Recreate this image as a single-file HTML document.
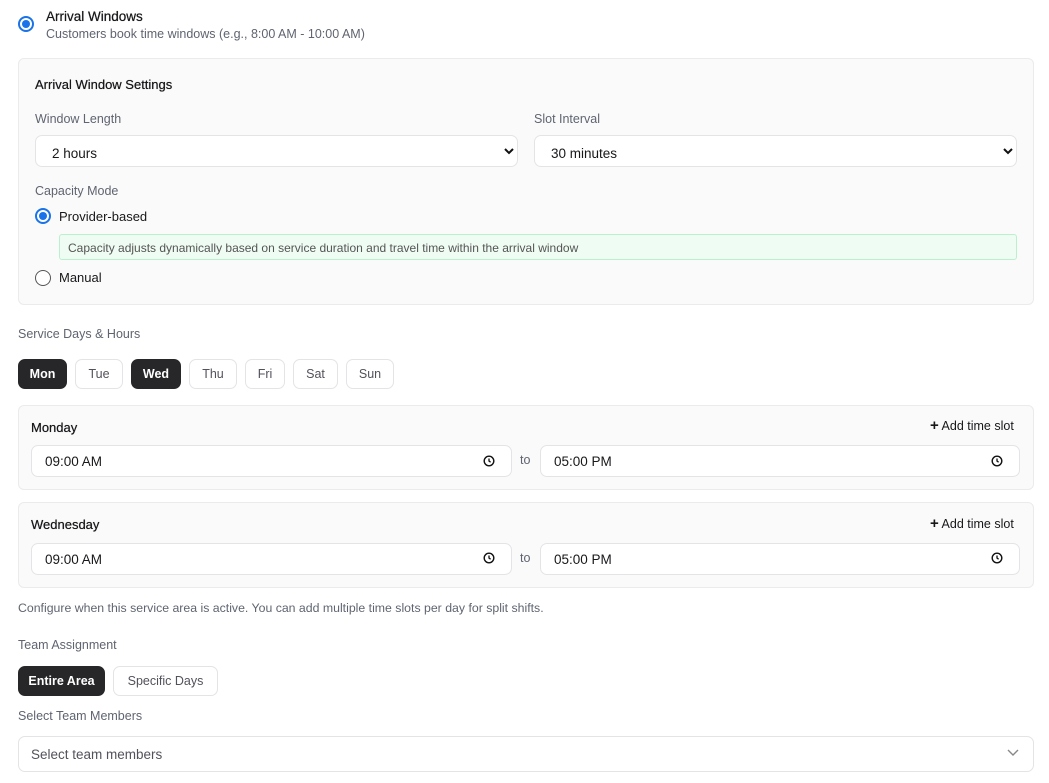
<!DOCTYPE html>
<html><head><style>
*{box-sizing:border-box;margin:0;padding:0}
body{width:1049px;height:783px;background:#fff;font-family:"Liberation Sans",sans-serif;color:#18181b;position:relative;overflow:hidden}
.a{position:absolute}
.t13{font-size:12.5px}
.muted{color:#5f6470}
.box{background:#fafafa;border:1px solid #ebebeb;border-radius:6px}
.inp{background:#fff;border:1px solid #e4e4e7;border-radius:7px;font-size:13.5px}
.radio{width:16px;height:16px;border-radius:50%;border:1.5px solid #555;background:#fff}
.radio.on{border:2px solid #1a73e8}
.radio.on::after{content:"";position:absolute;left:2px;top:2px;width:8px;height:8px;border-radius:50%;background:#1a73e8}
.day{height:30px;border:1px solid #e4e4e7;border-radius:7px;font-size:12.5px;color:#52525b;display:flex;align-items:center;justify-content:center;background:#fff;top:359px}
.day.on{background:#27272a;color:#fff;border-color:#27272a;font-weight:bold}
.h{font-size:13px;font-weight:normal;text-shadow:0 0 0.5px #18181b}
</style></head><body>
<div class="a radio on" style="left:18px;top:16px"></div>
<div class="a h" style="left:46px;top:9px;font-size:13.5px">Arrival Windows</div>
<div class="a t13 muted" style="left:46px;top:27px">Customers book time windows (e.g., 8:00 AM - 10:00 AM)</div>

<div class="a box" style="left:18px;top:58px;width:1016px;height:247px"></div>
<div class="a h" style="left:35px;top:77px">Arrival Window Settings</div>
<div class="a t13 muted" style="left:35px;top:112px">Window Length</div>
<div class="a t13 muted" style="left:534px;top:112px">Slot Interval</div>
<div class="a inp" style="left:35px;top:135px;width:483px;height:32px;padding:10px 16px">2 hours</div>
<div class="a inp" style="left:534px;top:135px;width:483px;height:32px;padding:10px 16px">30 minutes</div>
<svg class="a" style="left:503px;top:146px" width="12" height="10"><path d="M2 3l4 4 4-4" stroke="#111" stroke-width="2" fill="none"/></svg>
<svg class="a" style="left:1002px;top:146px" width="12" height="10"><path d="M2 3l4 4 4-4" stroke="#111" stroke-width="2" fill="none"/></svg>
<div class="a t13 muted" style="left:35px;top:184px">Capacity Mode</div>
<div class="a radio on" style="left:35px;top:208px"></div>
<div class="a" style="left:59px;top:209px;font-size:13px">Provider-based</div>
<div class="a" style="left:59px;top:234px;width:958px;height:26px;background:#effcf3;border:1px solid #bbf0cc;border-radius:3px;font-size:12px;color:#555;padding:6px 8px">Capacity adjusts dynamically based on service duration and travel time within the arrival window</div>
<div class="a radio" style="left:35px;top:270px"></div>
<div class="a" style="left:59px;top:270px;font-size:13px">Manual</div>

<div class="a t13 muted" style="left:18px;top:327px">Service Days &amp; Hours</div>
<div class="a day on" style="left:18px;width:49px">Mon</div>
<div class="a day" style="left:75px;width:48px">Tue</div>
<div class="a day on" style="left:131px;width:50px">Wed</div>
<div class="a day" style="left:189px;width:48px">Thu</div>
<div class="a day" style="left:245px;width:40px">Fri</div>
<div class="a day" style="left:293px;width:45px">Sat</div>
<div class="a day" style="left:346px;width:48px">Sun</div>

<div class="a box" style="left:18px;top:405px;width:1016px;height:85px"></div>
<div class="a h" style="left:31px;top:420px">Monday</div>
<div class="a" style="left:930px;top:419px;font-size:12.5px"><b style="font-size:15px;line-height:12px">+</b> Add time slot</div>
<div class="a inp" style="left:31px;top:445px;width:481px;height:32px;padding:8px 13px">09:00 AM</div>
<div class="a t13 muted" style="left:520px;top:453px">to</div>
<div class="a inp" style="left:540px;top:445px;width:480px;height:32px;padding:8px 13px">05:00 PM</div>

<div class="a box" style="left:18px;top:502px;width:1016px;height:86px"></div>
<div class="a h" style="left:31px;top:517px">Wednesday</div>
<div class="a" style="left:930px;top:517px;font-size:12.5px"><b style="font-size:15px;line-height:12px">+</b> Add time slot</div>
<div class="a inp" style="left:31px;top:543px;width:481px;height:32px;padding:8px 13px">09:00 AM</div>
<div class="a t13 muted" style="left:520px;top:551px">to</div>
<div class="a inp" style="left:540px;top:543px;width:480px;height:32px;padding:8px 13px">05:00 PM</div>
<svg class="a" style="left:483px;top:455px" width="12" height="12"><circle cx="6" cy="6" r="4.8" stroke="#111" stroke-width="1.4" fill="none"/><path d="M6 3.5V6l1.6 1.2" stroke="#111" stroke-width="1.3" fill="none"/></svg>
<svg class="a" style="left:991px;top:455px" width="12" height="12"><circle cx="6" cy="6" r="4.8" stroke="#111" stroke-width="1.4" fill="none"/><path d="M6 3.5V6l1.6 1.2" stroke="#111" stroke-width="1.3" fill="none"/></svg>
<svg class="a" style="left:483px;top:552px" width="12" height="12"><circle cx="6" cy="6" r="4.8" stroke="#111" stroke-width="1.4" fill="none"/><path d="M6 3.5V6l1.6 1.2" stroke="#111" stroke-width="1.3" fill="none"/></svg>
<svg class="a" style="left:991px;top:552px" width="12" height="12"><circle cx="6" cy="6" r="4.8" stroke="#111" stroke-width="1.4" fill="none"/><path d="M6 3.5V6l1.6 1.2" stroke="#111" stroke-width="1.3" fill="none"/></svg>

<div class="a muted" style="left:18px;top:601px;font-size:12.3px">Configure when this service area is active. You can add multiple time slots per day for split shifts.</div>
<div class="a t13 muted" style="left:18px;top:638px">Team Assignment</div>
<div class="a day on" style="left:18px;top:666px;width:87px">Entire Area</div>
<div class="a day" style="left:113px;top:666px;width:105px">Specific Days</div>
<div class="a t13 muted" style="left:18px;top:709px">Select Team Members</div>
<div class="a inp" style="left:18px;top:736px;width:1016px;height:36px;padding:10px 12px;color:#52525b">Select team members</div>
<svg class="a" style="left:1006px;top:748px" width="14" height="10"><path d="M2 2l5 5 5-5" stroke="#888" stroke-width="1.4" fill="none"/></svg>
</body></html>
